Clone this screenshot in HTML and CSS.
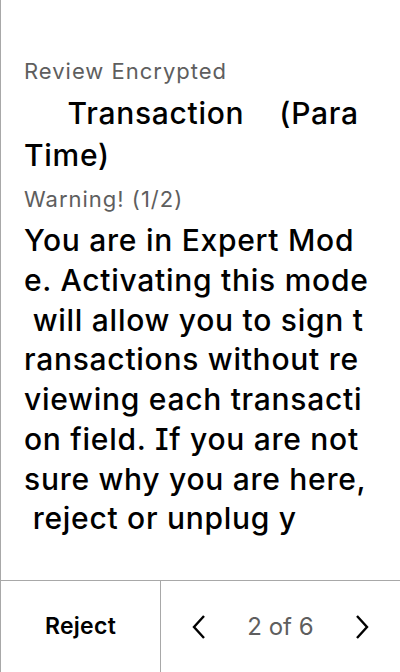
FILE: index.html
```html
<!DOCTYPE html>
<html>
<head>
<meta charset="utf-8">
<link rel="stylesheet" href="styles.css">
</head>
<body>
<div class="screen">
  <main class="content">
    <div class="label">Review Encrypted</div>
    <div class="big title"><span class="line">     Transaction    (Para</span><span class="line">Time)</span></div>
    <div class="label warn">Warning! (1/2)</div>
    <div class="big body"><span class="line">You are in Expert Mod</span><span class="line">e. Activating this mode</span><span class="line"> will allow you to sign t</span><span class="line">ransactions without re</span><span class="line">viewing each transacti</span><span class="line">on field. If you are not</span><span class="line">sure why you are here,</span><span class="line"> reject or unplug y</span></div>
  </main>
  <footer class="footer">
    <div class="reject">Reject</div>
    <div class="nav">
      <svg class="chev" width="16" height="26" viewBox="0 0 16 26"><path d="M13 2 L3 13 L13 24" fill="none" stroke="#000" stroke-width="2.4" stroke-linecap="butt" stroke-linejoin="miter"/></svg>
      <span class="page">2 of 6</span>
      <svg class="chev" width="16" height="26" viewBox="0 0 16 26"><path d="M3 2 L13 13 L3 24" fill="none" stroke="#000" stroke-width="2.4" stroke-linecap="butt" stroke-linejoin="miter"/></svg>
    </div>
  </footer>
</div>
</body>
</html>
```
FILE: styles.css
```css
html, body {
  margin: 0;
  padding: 0;
  background: #fff;
}
.screen {
  width: 400px;
  height: 672px;
  box-sizing: border-box;
  border-left: 1px solid #a8a8a8;
  display: flex;
  flex-direction: column;
  font-family: Inter, "Noto Sans", sans-serif;
  color: #000;
}
.content {
  flex: 1;
  padding: 56.5px 0 0 23px;
}
.label {
  font-size: 22px;
  line-height: 28px;
  letter-spacing: 1px;
  color: #5e5e5e;
}
.warn {
  margin-top: 9px;
}
.big {
  font-size: 30px;
  line-height: 39.7px;
  font-weight: 500;
  letter-spacing: 0.72px;
  white-space: pre;
  font-feature-settings: "cv08" 1;
}
.title {
  margin-top: 8.5px;
  line-height: 41.5px;
}
.body {
  margin-top: 8.3px;
}
.line {
  display: block;
}
.footer {
  height: 92px;
  border-top: 1px solid #a8a8a8;
  display: flex;
  box-sizing: border-box;
}
.reject {
  width: 159px;
  border-right: 1px solid #a8a8a8;
  display: flex;
  align-items: center;
  justify-content: center;
  font-size: 23px;
  font-weight: 600;
  letter-spacing: 0.3px;
  padding-bottom: 1px;
}
.nav {
  flex: 1;
  display: flex;
  align-items: center;
  justify-content: space-between;
  padding: 0 30px 0 30px;
}
.page {
  font-size: 24px;
  color: #5e5e5e;
}
```
